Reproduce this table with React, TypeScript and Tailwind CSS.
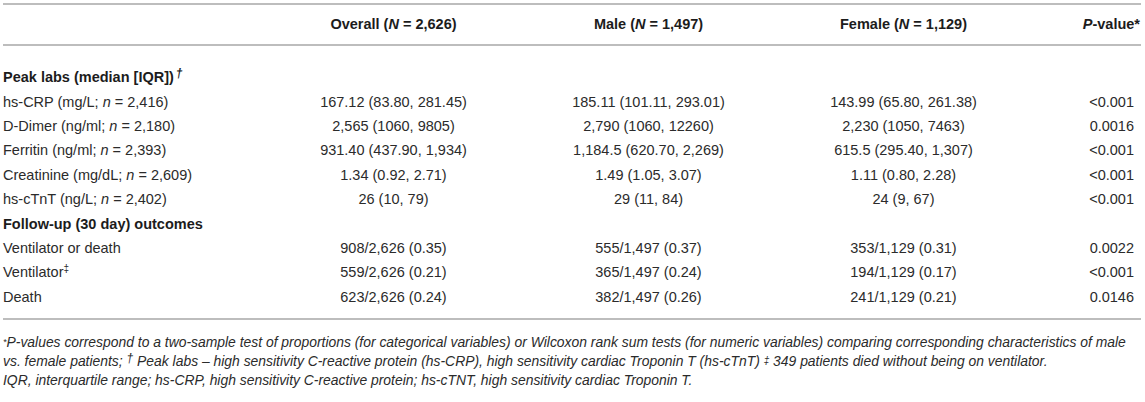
// Table: peak labs and 30-day outcomes by sex
const COLS = 'grid grid-cols-[263px_255px_255px_255px_1fr]';

type Row = { label: React.ReactNode; overall: string; male: string; female: string; p: string };

const Italic = ({ children }: { children: React.ReactNode }) => <i>{children}</i>;

const LABS: Row[] = [
  { label: <>hs-CRP (mg/L; <Italic>n</Italic> = 2,416)</>, overall: '167.12 (83.80, 281.45)', male: '185.11 (101.11, 293.01)', female: '143.99 (65.80, 261.38)', p: '<0.001' },
  { label: <>D-Dimer (ng/ml; <Italic>n</Italic> = 2,180)</>, overall: '2,565 (1060, 9805)', male: '2,790 (1060, 12260)', female: '2,230 (1050, 7463)', p: '0.0016' },
  { label: <>Ferritin (ng/ml; <Italic>n</Italic> = 2,393)</>, overall: '931.40 (437.90, 1,934)', male: '1,184.5 (620.70, 2,269)', female: '615.5 (295.40, 1,307)', p: '<0.001' },
  { label: <>Creatinine (mg/dL; <Italic>n</Italic> = 2,609)</>, overall: '1.34 (0.92, 2.71)', male: '1.49 (1.05, 3.07)', female: '1.11 (0.80, 2.28)', p: '<0.001' },
  { label: <>hs-cTnT (ng/L; <Italic>n</Italic> = 2,402)</>, overall: '26 (10, 79)', male: '29 (11, 84)', female: '24 (9, 67)', p: '<0.001' },
];

const OUTCOMES: Row[] = [
  { label: 'Ventilator or death', overall: '908/2,626 (0.35)', male: '555/1,497 (0.37)', female: '353/1,129 (0.31)', p: '0.0022' },
  { label: <>Ventilator<span className="text-[10px] align-top relative -top-[1px]">‡</span></>, overall: '559/2,626 (0.21)', male: '365/1,497 (0.24)', female: '194/1,129 (0.17)', p: '<0.001' },
  { label: 'Death', overall: '623/2,626 (0.24)', male: '382/1,497 (0.26)', female: '241/1,129 (0.21)', p: '0.0146' },
];

const DataRow = ({ row }: { row: Row }) => (
  <div className={`${COLS} h-[24.4px] items-center`}>
    <div>{row.label}</div>
    <div className="text-center">{row.overall}</div>
    <div className="text-center">{row.male}</div>
    <div className="text-center">{row.female}</div>
    <div className="text-right pr-[7px]">{row.p}</div>
  </div>
);

const SectionRow = ({ children }: { children: React.ReactNode }) => (
  <div className="h-[24.4px] flex items-center font-bold text-[#1c1c1c]">{children}</div>
);

export default function App() {
  return (
    <div className="w-[1145px] h-[402px] bg-white pt-[3px] pl-[3px] pr-[4px] text-[14.5px] text-[#2b2b2b] font-['Liberation_Sans',Arial,sans-serif] overflow-hidden">
      <div className={`${COLS} h-[43px] items-center border-y-2 border-[#bdbdbd] font-bold text-[#1c1c1c]`}>
        <div />
        <div className="text-center">Overall (<i>N</i> = 2,626)</div>
        <div className="text-center">Male (<i>N</i> = 1,497)</div>
        <div className="text-center">Female (<i>N</i> = 1,129)</div>
        <div className="text-right pr-[1px]"><i>P</i>-value*</div>
      </div>

      <div className="pt-[20px] pb-[8px] border-b-2 border-[#bdbdbd]">
        <SectionRow>
          Peak labs (median [IQR])<span className="text-[12px] italic self-start mt-[-2px] ml-[2px]">†</span>
        </SectionRow>
        {LABS.map((r, i) => <DataRow key={i} row={r} />)}
        <SectionRow>Follow-up (30 day) outcomes</SectionRow>
        {OUTCOMES.map((r, i) => <DataRow key={i} row={r} />)}
      </div>

      <div className="pt-[13px] text-[13.9px] italic leading-[19px] text-[#2b2b2b] whitespace-nowrap">
        <p>
          <span className="text-[9px] align-top">*</span>P-values correspond to a two-sample test of proportions (for categorical variables) or Wilcoxon rank sum tests (for numeric variables) comparing corresponding characteristics of male
        </p>
        <p>
          vs. female patients; <span className="text-[12px] align-top relative -top-[3px]">†</span> Peak labs – high sensitivity C-reactive protein (hs-CRP), high sensitivity cardiac Troponin T (hs-cTnT) <span className="text-[10px] align-top relative -top-[1px]">‡</span> 349 patients died without being on ventilator.
        </p>
        <p>IQR, interquartile range; hs-CRP, high sensitivity C-reactive protein; hs-cTNT, high sensitivity cardiac Troponin T.</p>
      </div>
    </div>
  );
}
